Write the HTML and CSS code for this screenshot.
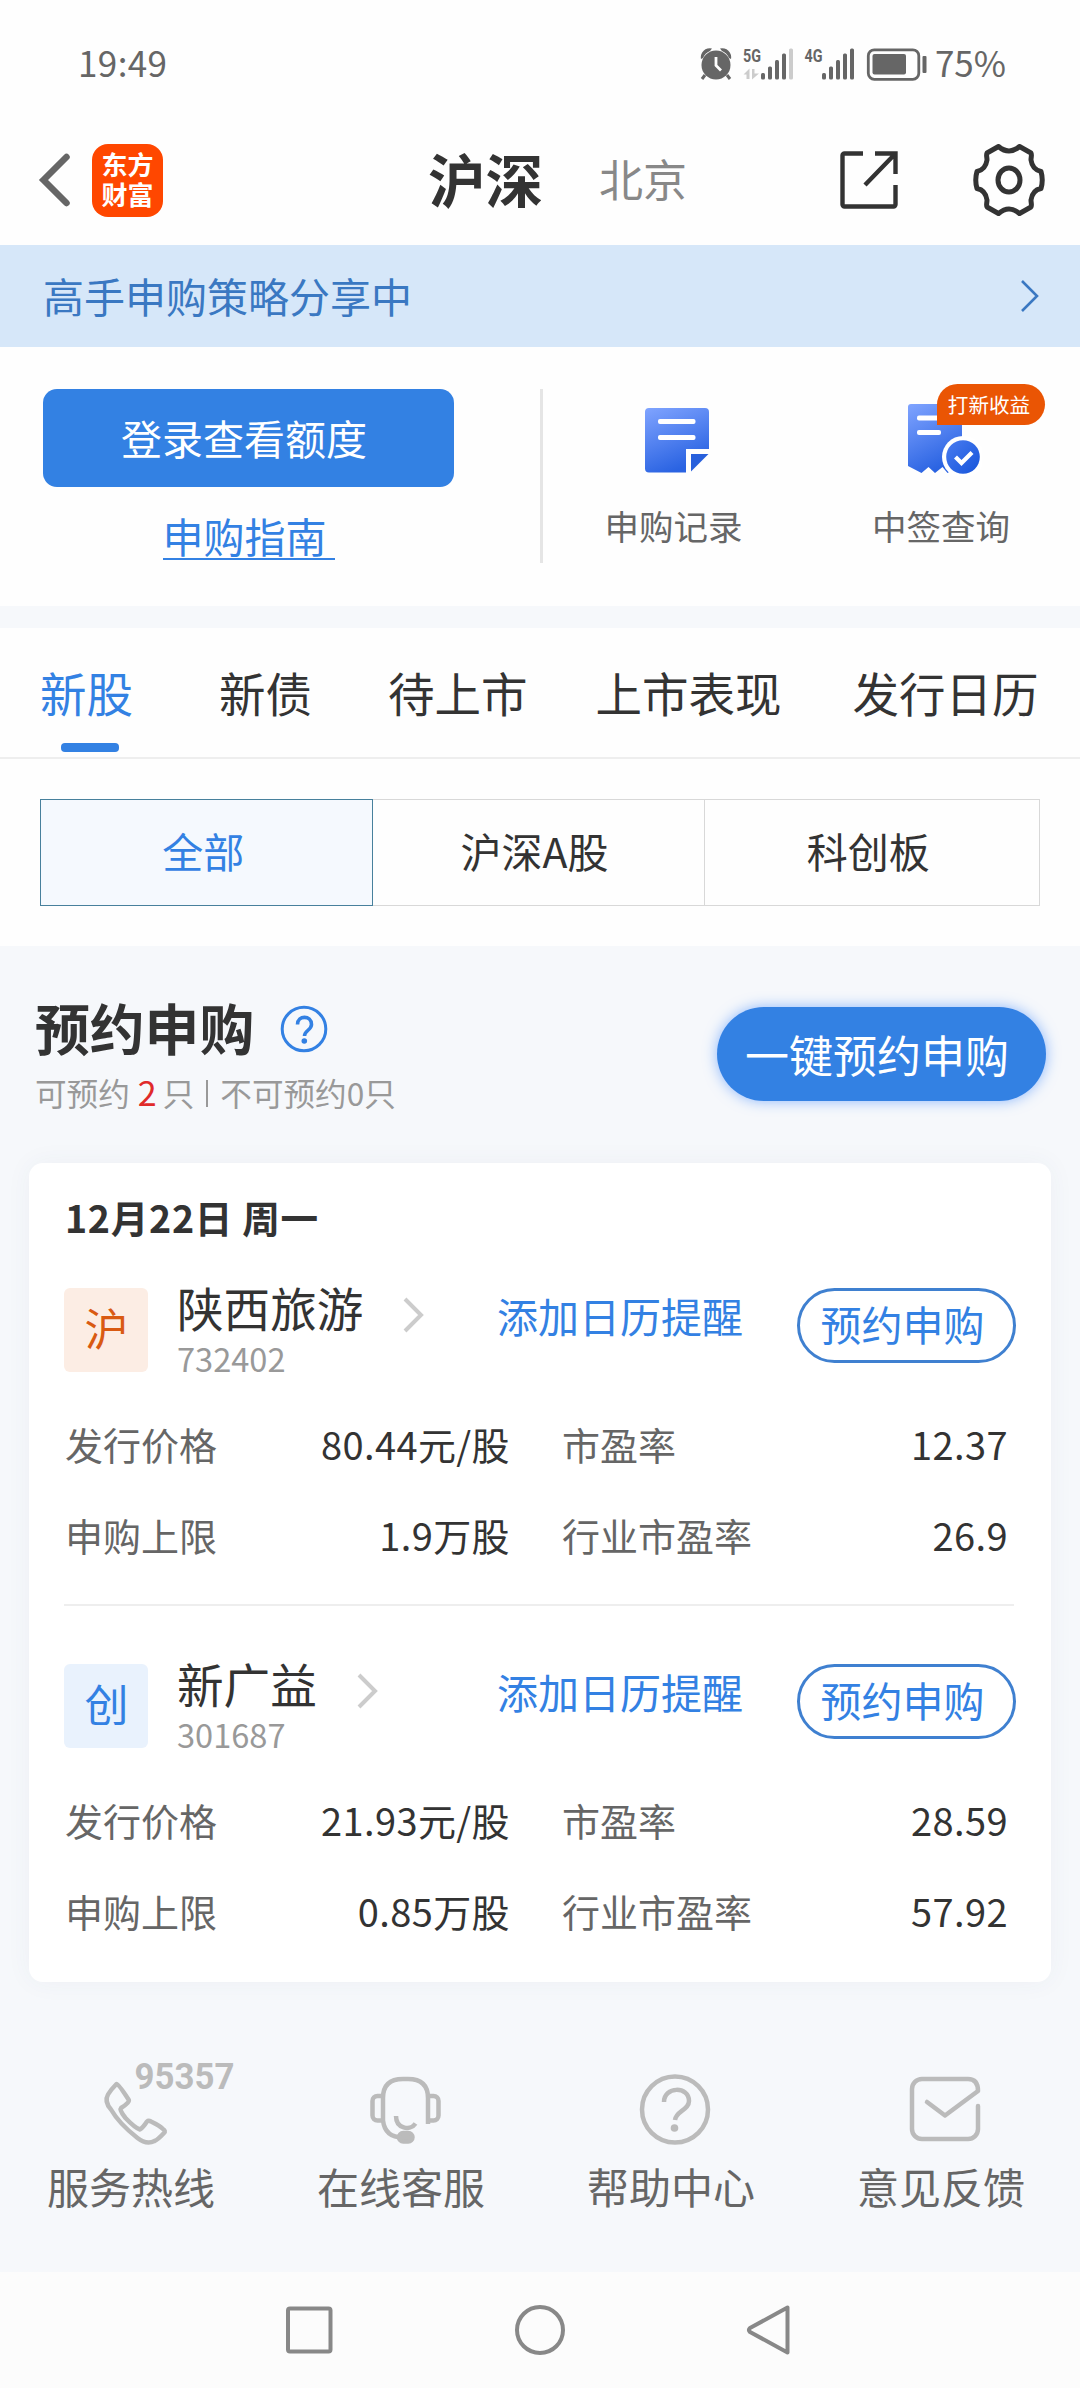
FILE: index.html
```html
<!DOCTYPE html>
<html lang="zh-CN">
<head>
<meta charset="utf-8">
<title>新股申购</title>
<link rel="stylesheet" href="styles.css">
</head>
<body>
<div class="status">
  <span class="clock">19:49</span>
  <svg class="status-icons" width="230" height="36" viewBox="702 46 230 36">
    <g fill="#666">
      <circle cx="719" cy="65" r="14.5"/>
      <path d="M704 59a9 9 0 0 1 11-10.500l-2 2.500q-5 2-7 7zM734 59a9 9 0 0 0-11-10.500l2 2.500q5 2 7 7z"/>
      <path d="M708 75l-3 4M730 75l3 4" stroke="#666" stroke-width="3"/>
      <path d="M719 57v8.500l5 5" fill="none" stroke="#fff" stroke-width="2.800"/>
      <rect x="764" y="73" width="4" height="6.500" rx="1.500"/><rect x="771" y="66.500" width="4" height="13" rx="1.500"/><rect x="778" y="60" width="4" height="19.500" rx="1.500"/><rect x="785" y="53.500" width="4" height="26" rx="1.500"/>
      <rect x="792" y="48.500" width="4" height="31" rx="1.500" fill="#ccc"/>
      <path d="M746.500 74.500l6-6V79h-3v-4.500zM755 69h2.500v4.500h4.500l-7 6z" fill="#ccc"/>
      <rect x="825" y="73" width="4" height="6.500" rx="1.500"/><rect x="832" y="66.500" width="4" height="13" rx="1.500"/><rect x="839" y="60" width="4" height="19.500" rx="1.500"/><rect x="846" y="53.500" width="4" height="26" rx="1.500"/><rect x="853" y="48.500" width="4" height="31" rx="1.500"/>
      <text class="net" x="746" y="62" textLength="18" lengthAdjust="spacingAndGlyphs">5G</text>
      <text class="net" x="807.500" y="62" textLength="18" lengthAdjust="spacingAndGlyphs">4G</text>
      <rect x="871.300" y="49.800" width="50.500" height="29.500" rx="6" fill="none" stroke="#666" stroke-width="2.800"/>
      <rect x="875.500" y="54" width="33.500" height="20.500" rx="2"/>
      <rect x="925.500" y="56" width="4" height="17" rx="1"/>
    </g>
  </svg>
  <span class="percent">75%</span>
</div>

<header class="header">
  <svg class="back" width="32" height="56" viewBox="0 0 32 56"><path d="M28.500 5L5.500 28l23 23" fill="none" stroke="#666" stroke-width="6.500" stroke-linecap="round" stroke-linejoin="miter"/></svg>
  <div class="logo"><span>东方</span><span>财富</span></div>
  <span class="title">沪深</span>
  <span class="subtitle">北京</span>
  <svg class="share" width="58" height="58" viewBox="0 0 58 58" fill="none" stroke="#333" stroke-width="4.400"><path d="M23 2.500H4.500a2 2 0 0 0-2 2v49a2 2 0 0 0 2 2h49a2 2 0 0 0 2-2V34M35 2.500h20.500V23M55 3L25 34"/></svg>
  <svg width="72" height="72" viewBox="-36 -36 72 72" fill="none" stroke="#333" stroke-width="5" stroke-linejoin="round"><path d="M-10.500-33.500Q0-24.500 10.500-33.500L22-27C23-25 22-23 22-20C23-13 27-9.500 32-8.500Q34.500 0 32 8.500C27 9.500 23 13 22 20C22 23 23 25 22 27L10.500 33.500Q0 24.500-10.500 33.500L-22 27C-23 25-22 23-22 20C-23 13-27 9.500-32 8.500Q-34.500 0-32-8.500C-27-9.500-23-13-22-20C-22-23-23-25-22-27Z"/><ellipse rx="11" ry="12"/></svg>
</header>

<div class="banner">
  <span>高手申购策略分享中</span>
  <svg width="20" height="34" viewBox="0 0 20 34"><path d="M2 2l15 15L2 32" fill="none" stroke="#3a78c2" stroke-width="2.600"/></svg>
</div>

<section class="quick">
  <div class="login">
    <div class="login-btn">登录查看额度</div>
    <a class="guide">申购指南</a>
  </div>
  <div class="links">
    <div class="link">
      <svg width="72" height="72" viewBox="0 0 72 72">
        <defs>
          <linearGradient id="sheet" x1="0" y1="0" x2=".4" y2="1"><stop offset="0" stop-color="#80a4ff"/><stop offset="1" stop-color="#2a63e2"/></linearGradient>
          <linearGradient id="seal" x1="0" y1="0" x2="1" y2="1"><stop offset="0" stop-color="#4a7cf0"/><stop offset="1" stop-color="#1554da"/></linearGradient>
        </defs>
        <path d="M8 4h56a4 4 0 0 1 4 4v37H45v23.500H8a4 4 0 0 1-4-4V8a4 4 0 0 1 4-4z" fill="url(#sheet)"/>
        <path d="M50 50h17.500L50 67.500z" fill="#2860dc"/>
        <rect x="17" y="15" width="37.500" height="5" rx="2" fill="#fff"/><rect x="17" y="31" width="37.500" height="5" rx="2" fill="#fff"/>
      </svg>
      <span>申购记录</span>
    </div>
    <div class="link">
      <svg width="76" height="72" viewBox="0 0 76 72">
        <path d="M5 0h48a3 3 0 0 1 3 3v62l-8 0-6.500 4-5-6-7.500 6-6.500-6-7 6L2 62V3a3 3 0 0 1 3-3z" fill="url(#sheet)"/>
        <circle cx="57" cy="53" r="21" fill="#fff"/><circle cx="57" cy="53" r="16.800" fill="url(#seal)"/>
        <path d="M49.500 53l6 6 10.500-10.500" fill="none" stroke="#fff" stroke-width="4.200"/>
        <rect x="11" y="11.500" width="24" height="5" rx="2" fill="#fff"/><rect x="11" y="26" width="24" height="5" rx="2" fill="#fff"/>
      </svg>
      <span>中签查询</span>
      <b class="badge">打新收益</b>
    </div>
  </div>
</section>

<nav class="tabs">
  <span class="tab active">新股</span><span class="tab">新债</span><span class="tab">待上市</span><span class="tab">上市表现</span><span class="tab">发行日历</span>
</nav>

<div class="filter">
  <div class="seg on">全部</div><div class="seg">沪深A股</div><div class="seg">科创板</div>
</div>

<main class="main">
  <div class="heading">
    <div class="heading-text">
      <h2><span>预约申购</span><svg width="48" height="48" viewBox="0 0 48 48" fill="none" stroke="#3381e3" stroke-width="3"><circle cx="24" cy="24" r="21.800"/><path d="M17.500 19.500c0-9.500 14-9.500 14 0 0 5.500-7 6-7 11.500" stroke-width="3.600"/><circle cx="24.300" cy="36" r="2.800" fill="#3381e3" stroke="none"/></svg></h2>
      <p>可预约<em>2</em>只<i></i>不可预约0只</p>
    </div>
    <div class="all-btn">一键预约申购</div>
  </div>

  <div class="card">
    <h3>12月22日 周一</h3>
    <article class="stock">
      <div class="stock-head">
        <div class="market sh">沪</div>
        <div class="name"><strong>陕西旅游<svg width="22" height="36" viewBox="0 0 22 36"><path d="M2 2l16 16L2 34" fill="none" stroke="#ccc" stroke-width="4"/></svg></strong><small>732402</small></div>
        <span class="remind">添加日历提醒</span>
        <span class="pill">预约申购</span>
      </div>
      <dl><dt>发行价格</dt><dd>80.44元/股</dd><dt>市盈率</dt><dd>12.37</dd><dt>申购上限</dt><dd>1.9万股</dd><dt>行业市盈率</dt><dd>26.9</dd></dl>
    </article>
    <article class="stock">
      <div class="stock-head">
        <div class="market cy">创</div>
        <div class="name"><strong>新广益<svg width="22" height="36" viewBox="0 0 22 36"><path d="M2 2l16 16L2 34" fill="none" stroke="#ccc" stroke-width="4"/></svg></strong><small>301687</small></div>
        <span class="remind">添加日历提醒</span>
        <span class="pill">预约申购</span>
      </div>
      <dl><dt>发行价格</dt><dd>21.93元/股</dd><dt>市盈率</dt><dd>28.59</dd><dt>申购上限</dt><dd>0.85万股</dd><dt>行业市盈率</dt><dd>57.92</dd></dl>
    </article>
  </div>

  <footer class="help">
    <div><svg width="140" height="90" viewBox="0 0 140 90"><path d="M51.500 29q2 0 12 15.500 2 2.500-7.500 8.500-2 2 4.500 10 9.500 10 14.500 11.500 3-2 7-8 1.500-1.500 4 0 8.500 4 12 7.500 3 2 1 4-6.500 7-9.500 8-8 4-17-3Q54 68.500 46 54.500q-7-8-3-15 3-5 8.500-10.500z"/><text class="hotline" x="69.500" y="34" textLength="100" lengthAdjust="spacingAndGlyphs">95357</text></svg><span>服务热线</span></div>
    <div><svg width="140" height="90" viewBox="0 0 140 90"><path d="M48 67V43q0-19 20-19h5q20 0 20 19v26M93 41h5.500a5 5 0 0 1 5 5v14.500a5 5 0 0 1-5 5H93M48 41h-5.500a5 5 0 0 0-5 5v14.500a5 5 0 0 0 5 5H48q2 17 20 17M61 61c0 12.500 14 15.500 19.500 7.500"/><rect x="64" y="78" width="13.500" height="8.500" rx="4.200" fill="#bbb"/></svg><span>在线客服</span></div>
    <div><svg width="140" height="90" viewBox="0 0 140 90"><circle cx="70" cy="54.500" r="33"/><path d="M59 47c0-16 25-16 25-1 0 9-13 10-14 19"/><circle cx="69.500" cy="73" r="3.800" fill="#bbb" stroke="none"/></svg><span>帮助中心</span></div>
    <div><svg width="140" height="90" viewBox="0 0 140 90"><path d="M103 51v23a10 10 0 0 1-10 10H47a10 10 0 0 1-10-10V34a10 10 0 0 1 10-10h46q10 0 10 12L70 60.500 52 47" stroke-linecap="round"/></svg><span>意见反馈</span></div>
  </footer>
</main>

<div class="sysnav">
  <svg width="540" height="56" viewBox="270 2302 540 56" fill="none" stroke="#888" stroke-width="4"><rect x="288" y="2308.500" width="42.500" height="43" rx="2"/><circle cx="540" cy="2330" r="23"/><path d="M787.500 2307.500v45L750 2332q-2-2 0-4z" stroke-linejoin="round"/></svg>
</div>
</body>
</html>
```
FILE: styles.css
```css
* { box-sizing: border-box; margin: 0; padding: 0; }
body {
  width: 1080px;
  height: 2388px;
  background: #fefefe;
  color: #333;
  font-family: "Noto Sans CJK SC", sans-serif;
  line-height: 1;
  white-space: nowrap;
  overflow: hidden;
}
svg { display: block; flex: none; }

.status {
  height: 128px;
  padding: 0 74px 5px 78px;
  display: flex;
  align-items: center;
  color: #666;
  font-size: 35px;
}
.clock { letter-spacing: .4px; }
.status-icons { margin-left: auto; margin-top: 5px; }
.percent { margin-left: 6px; }
.net { font: bold 18px "Roboto", sans-serif; }

.header {
  height: 117px;
  padding: 0 35px 13px 38px;
  display: flex;
  align-items: center;
}
.logo {
  width: 71px;
  height: 73px;
  margin-left: 22px;
  border-radius: 16px;
  background: #ff4700;
  color: #fff;
  font-size: 26px;
  font-weight: bold;
  line-height: 30px;
  padding-top: 5px;
  text-align: center;
}
.logo span { display: block; }
.title {
  margin-left: 265px;
  font-size: 57.5px;
  font-weight: bold;
  line-height: 64px;
  margin-top: -5px;
}
.subtitle { margin-left: 56px; font-size: 44px; line-height: 48px; margin-top: -4px; color: #888; }
.share { margin-left: auto; margin-right: 75px; }

.banner {
  height: 102px;
  padding: 0 40px 0 43px;
  display: flex;
  align-items: center;
  justify-content: space-between;
  background: #d6e7f9;
  color: #3a78c2;
  font-size: 41px;
}
.banner span { padding-bottom: 1px; }

.quick {
  height: 281px;
  padding: 42px 0 0 43px;
  display: flex;
  border-bottom: 22px solid #f6f8fb;
}
.login { width: 411px; display: flex; flex-direction: column; align-items: center; }
.login-btn {
  width: 411px;
  height: 98px;
  padding-right: 9px;
  border-radius: 14px;
  background: #3381e3;
  color: #fff;
  font-size: 41px;
  line-height: 96px;
  text-align: center;
}
.guide {
  width: 172px;
  height: 45px;
  margin-top: 28px;
  border-bottom: 2px solid #3381e3;
  color: #3381e3;
  font-size: 41px;
  line-height: 41px;
}
.links {
  height: 174px;
  margin-left: 86px;
  border-left: 3px solid #e5e5e5;
  display: flex;
  flex: 1;
}
.link {
  position: relative;
  width: 268px;
  padding-top: 15px;
  display: flex;
  flex-direction: column;
  align-items: center;
  gap: 32px;
  color: #666;
  font-size: 34.5px;
}
.link:first-child { width: 264px; }
.link:first-child svg { margin-left: 4px; }
.link:first-child span { margin-right: 3px; }
.link:nth-child(2) svg { margin-left: 5px; }
.badge {
  position: absolute;
  left: 130px;
  top: -5px;
  width: 108px;
  height: 41px;
  border-radius: 21px 21px 21px 0;
  background: #ea5504;
  color: #fff;
  font-size: 20.6px;
  font-weight: normal;
  line-height: 40px;
  text-align: center;
  padding-right: 4px;
}

.tabs {
  height: 131px;
  padding: 0 40px;
  border-bottom: 2px solid #eee;
  display: flex;
  font-size: 46.5px;
  line-height: 127px;
}
.tab { position: relative; }
.tab:nth-child(2) { margin-left: 86px; }
.tab:nth-child(3) { margin-left: 76px; }
.tab:nth-child(4) { margin-left: 68px; }
.tab:nth-child(5) { margin-left: 71px; }
.active { color: #3381e3; }
.active::after {
  content: "";
  position: absolute;
  left: 21px;
  bottom: 5px;
  width: 58px;
  height: 9px;
  border-radius: 4px;
  background: #3381e3;
}

.filter { height: 187px; padding: 40px 40px 0; display: flex; }
.seg {
  width: 333px;
  height: 107px;
  border: 1px solid #d8d8d8;
  border-left: 0;
  padding-right: 8px;
  font-size: 41px;
  line-height: 101px;
  text-align: center;
}
.seg.on { border: 1px solid #47809c; padding-right: 6px; background: #f5f9fe; color: #3381e3; }
.seg:last-child { width: 335px; }

.main { height: 1326px; background: #f6f8fb; padding: 0 29px; }
.heading { height: 217px; display: flex; justify-content: space-between; }
.heading-text { padding: 50px 0 0 6px; }
h2 { display: flex; align-items: center; font-size: 54.8px; line-height: 64px; height: 66px; }
h2 span { margin-top: -6px; }
h2 svg { margin-left: 26px; }
.heading p { display: flex; align-items: center; margin-top: 12px; height: 36px; color: #999; font-size: 31.6px; line-height: 36px; }
.heading em { margin: 0 6px 0 8px; color: #e02a2a; font-style: normal; font-size: 34px; }
.heading i { width: 2px; height: 27px; margin: 2px 12px 0 12px; background: #999; }
.all-btn {
  width: 329px;
  height: 94px;
  margin: 61px 5px 0 0;
  padding-right: 9px;
  border-radius: 47px;
  background: #3381e3;
  box-shadow: 0 0 14px rgba(51, 129, 255, .55);
  color: #fff;
  font-size: 44px;
  line-height: 94px;
  text-align: center;
}

.card {
  height: 819px;
  padding: 36px 35px 0;
  border-radius: 14px;
  background: #fff;
  box-shadow: 0 0 26px rgba(60, 80, 110, .05);
}
h3 { padding-left: 1px; margin-top: -1px; font-size: 37.6px; line-height: 38px; height: 90px; letter-spacing: .7px; }
.stock { height: 376px; }
.stock + .stock dl { border: 0; }
.stock-head { display: flex; height: 84px; align-items: flex-start; }
.market {
  width: 84px;
  height: 84px;
  border: 1px solid transparent;
  border-right: 0;
  border-radius: 6px;
  font-size: 44px;
  line-height: 77px;
  text-align: center;
}
.sh { background: #fcede4; color: #d95a12; }
.cy { background: #e9f2fd; color: #3381e3; }
.name { width: 320px; padding-left: 29px; }
.name strong { display: flex; align-items: center; height: 46px; margin-top: -4px; font-size: 46.6px; font-weight: normal; }
.name strong svg { margin: 15px 0 0 40px; }
.name small { display: block; margin-top: 10px; font-size: 32.6px; line-height: 36px; color: #999; }
.remind { margin: 7px 0 0 29px; font-size: 41px; color: #3381e3; }
.pill {
  width: 219px;
  height: 75px;
  margin: 0 0 0 auto;
  border: 3px solid #3f80d0;
  border-radius: 38px;
  padding-right: 8px;
  color: #3381e3;
  font-size: 41px;
  line-height: 65px;
  text-align: center;
}
dl {
  height: 234px;
  margin: 0 2px 58px 0;
  padding: 28px 6px 0 0;
  border-bottom: 2px solid #eee;
  display: grid;
  grid-template-columns: 168px 278px 192px 1fr;
  grid-auto-rows: 91px;
  font-size: 38px;
  line-height: 88px;
}
dt { padding-left: 1px; color: #666; }
dt:nth-of-type(even) { padding-left: 52px; }
dd { text-align: right; letter-spacing: .4px; }

.help {
  display: grid;
  grid-template-columns: repeat(4, 270px);
  margin: 0 -29px;
  padding-top: 73px;
  color: #666;
  font-size: 42px;
}
.help div { display: flex; flex-direction: column; align-items: center; }
.help svg { fill: none; stroke: #bbb; stroke-width: 4.500; stroke-linejoin: round; overflow: visible; }
.help span { margin: 20px 8px 0 0; }
.hotline { fill: #bbb; stroke: none; font: bold 36px "Roboto", sans-serif; }

.sysnav { height: 116px; background: #fcfcfc; padding-top: 30px; display: flex; justify-content: center; }
```
